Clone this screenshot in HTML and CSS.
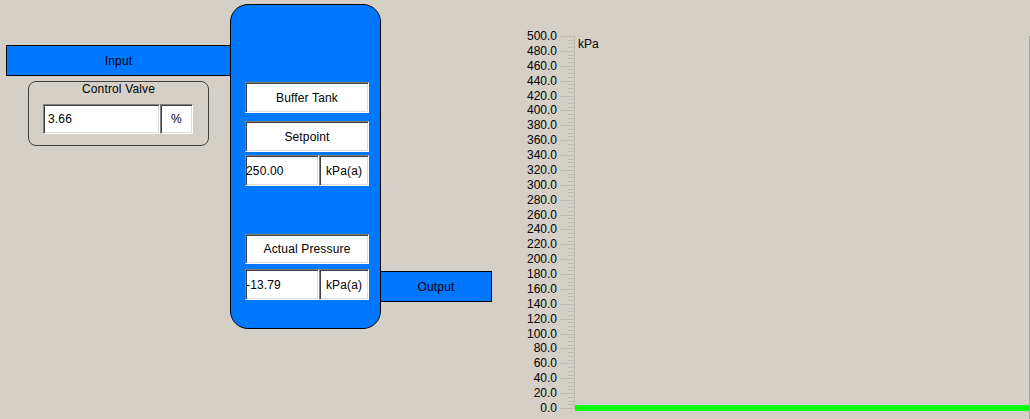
FILE: index.html
```html
<!DOCTYPE html>
<html>
<head>
<meta charset="utf-8">
<link rel="stylesheet" href="styles.css">
</head>
<body>
<div class="canvas">
  <div class="pipe pipe-in">Input</div>
  <div class="group valve">
    <div class="group-title">Control Valve</div>
    <div class="field field-valve">
      <span class="cell val val-pad">3.66</span>
      <span class="cell unit unit-pct">%</span>
    </div>
  </div>
  <div class="tank">
    <div class="cell label">Buffer Tank</div>
    <div class="cell label gap-sm">Setpoint</div>
    <div class="field gap-xs">
      <span class="cell val">250.00</span>
      <span class="cell unit">kPa(a)</span>
    </div>
    <div class="cell label label-short gap-lg">Actual Pressure</div>
    <div class="field gap-md">
      <span class="cell val">-13.79</span>
      <span class="cell unit">kPa(a)</span>
    </div>
  </div>
  <div class="pipe pipe-out">Output</div>
  <svg class="chart" width="530" height="419" viewBox="500 0 530 419" shape-rendering="crispEdges">
    <path class="ticks" d="M560 408.5H574M560 393.5H574M560 378.5H574M560 363.5H574M560 348.5H574M560 334.5H574M560 319.5H574M560 304.5H574M560 289.5H574M560 274.5H574M560 259.5H574M560 244.5H574M560 229.5H574M560 215.5H574M560 200.5H574M560 185.5H574M560 170.5H574M560 155.5H574M560 140.5H574M560 125.5H574M560 110.5H574M560 96.5H574M560 81.5H574M560 66.5H574M560 51.5H574M560 36.5H574"/>
    <path class="ticks" d="M568 404.5H574M568 401.5H574M568 397.5H574M568 389.5H574M568 386.5H574M568 382.5H574M568 375.5H574M568 371.5H574M568 367.5H574M568 360.5H574M568 356.5H574M568 352.5H574M568 345.5H574M568 341.5H574M568 337.5H574M568 330.5H574M568 326.5H574M568 322.5H574M568 315.5H574M568 311.5H574M568 308.5H574M568 300.5H574M568 296.5H574M568 293.5H574M568 285.5H574M568 282.5H574M568 278.5H574M568 270.5H574M568 267.5H574M568 263.5H574M568 255.5H574M568 252.5H574M568 248.5H574M568 241.5H574M568 237.5H574M568 233.5H574M568 226.5H574M568 222.5H574M568 218.5H574M568 211.5H574M568 207.5H574M568 203.5H574M568 196.5H574M568 192.5H574M568 189.5H574M568 181.5H574M568 177.5H574M568 174.5H574M568 166.5H574M568 162.5H574M568 159.5H574M568 151.5H574M568 148.5H574M568 144.5H574M568 136.5H574M568 133.5H574M568 129.5H574M568 122.5H574M568 118.5H574M568 114.5H574M568 107.5H574M568 103.5H574M568 99.5H574M568 92.5H574M568 88.5H574M568 84.5H574M568 77.5H574M568 73.5H574M568 69.5H574M568 62.5H574M568 58.5H574M568 55.5H574M568 47.5H574M568 43.5H574M568 40.5H574"/>
    <path class="ticks" d="M574.5 36V409"/>
    <path class="frame" d="M1029.5 36V419"/>
    <rect class="trend" x="575" y="405" width="454" height="6"/>
    <g class="axis-labels">
      <text x="557" y="412">0.0</text>
      <text x="557" y="397">20.0</text>
      <text x="557" y="382">40.0</text>
      <text x="557" y="367">60.0</text>
      <text x="557" y="352">80.0</text>
      <text x="557" y="338">100.0</text>
      <text x="557" y="323">120.0</text>
      <text x="557" y="308">140.0</text>
      <text x="557" y="293">160.0</text>
      <text x="557" y="278">180.0</text>
      <text x="557" y="263">200.0</text>
      <text x="557" y="248">220.0</text>
      <text x="557" y="233">240.0</text>
      <text x="557" y="219">260.0</text>
      <text x="557" y="204">280.0</text>
      <text x="557" y="189">300.0</text>
      <text x="557" y="174">320.0</text>
      <text x="557" y="159">340.0</text>
      <text x="557" y="144">360.0</text>
      <text x="557" y="129">380.0</text>
      <text x="557" y="114">400.0</text>
      <text x="557" y="100">420.0</text>
      <text x="557" y="85">440.0</text>
      <text x="557" y="70">460.0</text>
      <text x="557" y="55">480.0</text>
      <text x="557" y="40">500.0</text>
    </g>
    <text class="unit-label" x="578" y="48">kPa</text>
  </svg>
</div>
</body>
</html>
```

FILE: styles.css
```css
* { box-sizing: border-box; }
html, body {
  margin: 0;
  padding: 0;
  background: #d4d0c8;
}
body {
  font-family: "Liberation Sans", Arial, sans-serif;
  font-size: 12px;
  letter-spacing: 0.15px;
  color: #000;
}
.canvas {
  position: relative;
  width: 1030px;
  height: 419px;
  overflow: hidden;
}
.pipe {
  position: absolute;
  height: 31px;
  background: #0077ff;
  border: 1px solid #000;
  display: flex;
  align-items: center;
  justify-content: center;
}
.pipe-in { left: 6px; top: 45px; width: 225px; }
.pipe-out { left: 380px; top: 271px; width: 112px; }

.group {
  position: absolute;
  left: 28px;
  top: 81px;
  width: 181px;
  height: 65px;
  border: 1px solid #404040;
  border-radius: 8px;
  padding-left: 14px;
}
.group-title {
  height: 14px;
  line-height: 14px;
  text-align: center;
  margin-left: -14px;
}
.field {
  display: flex;
  height: 31px;
}
.field-valve {
  margin-top: 8px;
  width: 150px;
  height: 30px;
}

.cell {
  background: #fff;
  border-style: solid;
  border-width: 1px;
  border-color: #808080 #fff #fff #808080;
  box-shadow: inset 1px 1px 0 #404040, inset -1px -1px 0 #dcdcdc;
  display: flex;
  align-items: center;
}
.val { flex: 1; padding-left: 0; }
.val-pad { padding-left: 4px; }
.unit { width: 50px; justify-content: center; }
.unit-pct { width: 33px; }

.tank {
  position: absolute;
  left: 230px;
  top: 4px;
  width: 151px;
  height: 325px;
  background: #0077ff;
  border: 1px solid #000;
  border-radius: 18px;
  padding: 77px 0 0 14px;
  display: flex;
  flex-direction: column;
}
.tank > * { width: 124px; flex: none; }
.label {
  height: 31px;
  justify-content: center;
}
.label-short { height: 30px; }
.gap-sm { margin-top: 8px; }
.gap-xs { margin-top: 3px; }
.gap-lg { margin-top: 48px; }
.gap-md { margin-top: 5px; }

.chart {
  position: absolute;
  left: 500px;
  top: 0;
}
.ticks { stroke: #bdbab4; stroke-width: 1; fill: none; }
.frame { stroke: #a9a6a0; stroke-width: 1; fill: none; }
.trend { fill: #00ff00; }
.axis-labels text {
  font-family: "Liberation Sans", Arial, sans-serif;
  font-size: 12px;
  letter-spacing: 0;
  fill: #000;
  text-anchor: end;
}
.unit-label {
  font-family: "Liberation Sans", Arial, sans-serif;
  font-size: 12px;
  letter-spacing: 0;
  fill: #000;
}
```
